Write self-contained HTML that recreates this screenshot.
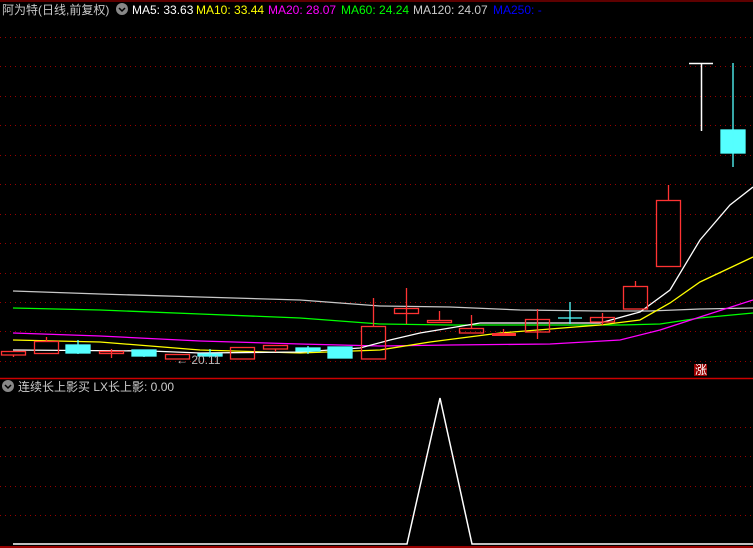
<!DOCTYPE html>
<html><head><meta charset="utf-8"><style>
html,body{margin:0;padding:0;background:#000;width:753px;height:548px;overflow:hidden}
svg{display:block}
text{font-family:"Liberation Sans","Noto Sans CJK SC",sans-serif;font-size:12px}
</style></head><body>
<svg width="753" height="548" viewBox="0 0 753 548" xmlns="http://www.w3.org/2000/svg">
<rect width="753" height="548" fill="#000"/>
<line x1="0" y1="1" x2="753" y2="1" stroke="#b00" stroke-width="1"/>
<g stroke="#900" stroke-width="1" stroke-dasharray="1,4">
<line x1="0" y1="37.5" x2="753" y2="37.5"/><line x1="0" y1="66.5" x2="753" y2="66.5"/>
<line x1="0" y1="96.5" x2="753" y2="96.5"/><line x1="0" y1="125.5" x2="753" y2="125.5"/>
<line x1="0" y1="155.5" x2="753" y2="155.5"/><line x1="0" y1="184.5" x2="753" y2="184.5"/>
<line x1="0" y1="214.5" x2="753" y2="214.5"/><line x1="0" y1="243.5" x2="753" y2="243.5"/>
<line x1="0" y1="273.5" x2="753" y2="273.5"/><line x1="0" y1="302.5" x2="753" y2="302.5"/>
<line x1="0" y1="331.5" x2="753" y2="331.5"/><line x1="0" y1="361.5" x2="753" y2="361.5"/>
<line x1="0" y1="427.5" x2="753" y2="427.5"/><line x1="0" y1="456.5" x2="753" y2="456.5"/>
<line x1="0" y1="486.5" x2="753" y2="486.5"/><line x1="0" y1="515.5" x2="753" y2="515.5"/>
</g>
<line x1="0" y1="378.5" x2="753" y2="378.5" stroke="#c00" stroke-width="1.5"/>
<line x1="0" y1="547" x2="753" y2="547" stroke="#c00" stroke-width="1.5"/>
<text x="2" y="14" fill="#c8c8c8" font-size="13">阿为特(日线,前复权)</text>
<circle cx="122" cy="9" r="6" fill="#888"/><path d="M119 8 L122 11 L125 8" stroke="#000" stroke-width="1.5" fill="none"/>
<text x="132" y="14" fill="#fff">MA5: 33.63</text>
<text x="196" y="14" fill="#ff0">MA10: 33.44</text>
<text x="268" y="14" fill="#f0f">MA20: 28.07</text>
<text x="341" y="14" fill="#0f0">MA60: 24.24</text>
<text x="413" y="14" fill="#ccc">MA120: 24.07</text>
<text x="493" y="14" fill="#00f">MA250: -</text>
<g fill="none" stroke-width="1.3">
<polyline stroke="#c8c8c8" points="13,291 100,294 200,297 300,300 380,306 450,307 520,310 600,311 650,311 700,309 753,308"/>
<polyline stroke="#0f0" points="13,308 100,310 200,314 300,318 380,324 450,325 550,325 620,325 660,324 700,318 753,313"/>
<polyline stroke="#f0f" points="13,333 100,336 200,341 300,344 380,346 450,345 550,344 620,340 660,330 700,317 753,300"/>
<polyline stroke="#ff0" points="13,340 100,342 200,350 300,353 380,350 430,342 500,333 600,325 640,320 670,303 700,282 753,257"/>
<polyline stroke="#fff" points="13,350 150,351 200,353 300,352 360,348 390,340 420,333 480,323 600,323 640,312 670,290 700,240 730,205 753,187"/>
</g>
<g stroke="#f33" stroke-width="1.3" fill="none">
<rect x="1.5" y="351.5" width="24" height="3.5"/><line x1="13.5" y1="355" x2="13.5" y2="357"/>
<rect x="34.5" y="341.5" width="24" height="12"/><line x1="46.5" y1="337" x2="46.5" y2="341"/>
<rect x="99.5" y="351.5" width="24" height="2"/><line x1="111.5" y1="349" x2="111.5" y2="358"/>
<rect x="165.5" y="354.5" width="24" height="4.5"/>
<rect x="230.5" y="347.5" width="24" height="11.5"/>
<rect x="263.5" y="345.5" width="24" height="3.5"/><line x1="275.5" y1="349" x2="275.5" y2="352"/>
<rect x="361.5" y="326.5" width="24" height="32.5"/><line x1="373.5" y1="298" x2="373.5" y2="326"/>
<rect x="394.5" y="308.5" width="24" height="5"/><line x1="406.5" y1="288" x2="406.5" y2="324"/>
<rect x="427.5" y="320.5" width="24" height="2"/><line x1="439.5" y1="311" x2="439.5" y2="320"/>
<rect x="459.5" y="328.5" width="24" height="4.5"/><line x1="471.5" y1="315" x2="471.5" y2="328"/>
<line x1="503.5" y1="329" x2="503.5" y2="336"/>
<rect x="525.5" y="319.5" width="24" height="12.5"/><line x1="537.5" y1="309" x2="537.5" y2="339"/>
<rect x="590.5" y="317.5" width="24" height="4.5"/><line x1="602.5" y1="313" x2="602.5" y2="325"/>
<rect x="623.5" y="286.5" width="24" height="22.5"/><line x1="635.5" y1="281" x2="635.5" y2="286"/>
<rect x="656.5" y="200.5" width="24" height="66"/><line x1="668.5" y1="185" x2="668.5" y2="200"/>
</g>
<rect x="492" y="333" width="24" height="3" fill="#f33"/>
<g fill="#5ff" stroke="#5ff" stroke-width="1.3">
<rect x="66" y="345" width="24" height="8"/><line x1="78" y1="340" x2="78" y2="354"/>
<rect x="132" y="350" width="24" height="6"/><line x1="144" y1="350" x2="144" y2="357"/>
<rect x="198" y="354" width="24" height="2"/><line x1="210" y1="349" x2="210" y2="356"/>
<rect x="296" y="348" width="24" height="3"/><line x1="308" y1="346" x2="308" y2="354"/>
<rect x="328" y="347" width="24" height="11"/>
<line x1="558" y1="318" x2="582" y2="318"/><line x1="570" y1="302" x2="570" y2="324"/>
<rect x="721" y="130" width="24" height="23"/><line x1="733" y1="63" x2="733" y2="167"/>
</g>
<g stroke="#fff" stroke-width="1.5"><line x1="689" y1="63.5" x2="713" y2="63.5"/><line x1="701.5" y1="63" x2="701.5" y2="131"/></g>
<text x="176" y="364" fill="#bbb" font-size="12">← 20.11</text>
<rect x="694" y="364" width="13" height="12" fill="#900"/>
<text x="695" y="374" fill="#fff" font-size="10">涨</text>
<circle cx="8" cy="386" r="6" fill="#888"/><path d="M5 385 L8 388 L11 385" stroke="#000" stroke-width="1.5" fill="none"/>
<text x="18" y="391" fill="#ccc" font-size="12">连续长上影买  LX长上影: 0.00</text>
<polyline fill="none" stroke="#fff" stroke-width="1.5" points="13,544 407,544 440,398 472,544 753,544"/>
</svg>
</body></html>
